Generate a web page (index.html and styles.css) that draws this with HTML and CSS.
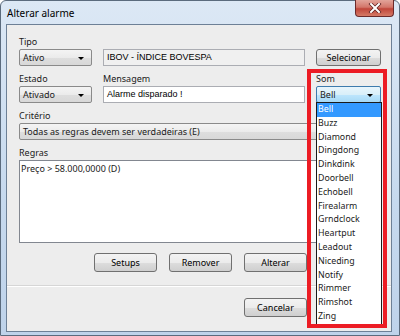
FILE: index.html
```html
<!DOCTYPE html>
<html lang="pt">
<head>
  <meta charset="UTF-8" />
  <title>Alterar alarme</title>
  <link rel="stylesheet" href="styles.css">
</head>
<body>

<div class="window">
  <!-- Barra de título -->
  <div class="titlebar">
    <span class="title">Alterar alarme</span>
    <div class="close">
      <svg width="14" height="10" viewBox="0 0 14 10">
        <path d="M3 1 L11 9 M11 1 L3 9" stroke="#5a1e1e" stroke-width="3.4" stroke-linecap="square"/>
        <path d="M3 1 L11 9 M11 1 L3 9" stroke="#ffffff" stroke-width="2" stroke-linecap="square"/>
      </svg>
    </div>
  </div>

  <div class="client">
    <div class="form">
      <div class="row">
        <div class="field col1">
          <span class="lbl">Tipo</span>
          <div class="combo">Ativo<span class="arrow"></span></div>
        </div>
        <div class="field col2">
          <span class="lbl"></span>
          <div class="textbox readonly">IBOV - ÍNDICE BOVESPA</div>
        </div>
        <div class="field col3">
          <span class="lbl"></span>
          <div class="btn">Selecionar</div>
        </div>
      </div>

      <div class="row">
        <div class="field col1">
          <span class="lbl">Estado</span>
          <div class="combo">Ativado<span class="arrow"></span></div>
        </div>
        <div class="field col2">
          <span class="lbl">Mensagem</span>
          <div class="textbox">Alarme disparado !</div>
        </div>
        <div class="field col3">
          <span class="lbl">Som</span>
          <div class="combo focus">Bell<span class="arrow"></span></div>
        </div>
      </div>

      <div class="field">
        <span class="lbl">Critério</span>
        <div class="combo">Todas as regras devem ser verdadeiras (E)<span class="arrow"></span></div>
      </div>

      <div class="field">
        <span class="lbl">Regras</span>
        <div class="listbox">Preço &gt; 58.000,0000 (D)</div>
      </div>

      <div class="buttons">
        <div class="btn">Setups</div>
        <div class="btn">Remover</div>
        <div class="btn">Alterar</div>
        <div class="btn ghost"></div>
      </div>
    </div>

    <div class="footer">
      <div class="btn">Cancelar</div>
      <div class="btn ghost"></div>
    </div>
  </div>

  <!-- Lista aberta do combo Som -->
  <div class="droplist">
    <div class="item selected">Bell</div>
    <div class="item">Buzz</div>
    <div class="item">Diamond</div>
    <div class="item">Dingdong</div>
    <div class="item">Dinkdink</div>
    <div class="item">Doorbell</div>
    <div class="item">Echobell</div>
    <div class="item">Firealarm</div>
    <div class="item">Grndclock</div>
    <div class="item">Heartput</div>
    <div class="item">Leadout</div>
    <div class="item">Niceding</div>
    <div class="item">Notify</div>
    <div class="item">Rimmer</div>
    <div class="item">Rimshot</div>
    <div class="item">Zing</div>
  </div>

  <div class="mark"></div>
</div>

</body>
</html>
```

FILE: styles.css
```css
html, body {
  margin: 0;
  padding: 0;
  background: #ffffff;
  font-family: 'Noto Sans', sans-serif;
  font-size: 9px;
  color: #1a1a1a;
}

.window {
  position: relative;
  box-sizing: border-box;
  width: 400px;
  height: 336px;
  border: 1px solid #5b6b7d;
  border-radius: 6px 6px 0 0;
  padding: 0 7px 3px 5px;
  background: linear-gradient(180deg, #dce8f5 0%, #c6d9ee 60%, #bfd3ea 100%);
  display: flex;
  flex-direction: column;
}

.titlebar {
  height: 23px;
  display: flex;
  align-items: center;
}

.title {
  padding-left: 1px;
  font-size: 10px;
  color: #000;
}

.close {
  position: absolute;
  top: -1px;
  right: 5px;
  width: 39px;
  height: 17px;
  box-sizing: border-box;
  border: 1px solid #6b2a2a;
  border-top: none;
  border-radius: 0 0 4px 4px;
  background: linear-gradient(180deg, #e2a49a 0%, #d3766a 45%, #c0463a 55%, #d57a66 100%);
  display: flex;
  align-items: center;
  justify-content: center;
}

.client {
  flex: 1;
  border: 1px solid #6d8096;
  background: #ededed;
  display: flex;
  flex-direction: column;
}

.form {
  padding: 11px 9px 0 12px;
  display: flex;
  flex-direction: column;
  gap: 7px;
}

.row {
  display: flex;
  gap: 11px;
}

.field {
  display: flex;
  flex-direction: column;
}

.col1 { width: 73px; }
.col2 { width: 202px; }
.col3 { width: 65px; }

.lbl {
  height: 13px;
  line-height: 12px;
  white-space: nowrap;
}

.combo {
  position: relative;
  box-sizing: border-box;
  height: 17px;
  line-height: 15px;
  padding-left: 3px;
  border: 1px solid #8a8a8a;
  border-radius: 2px;
  background: linear-gradient(180deg, #f4f4f4 0%, #ebebeb 50%, #dedede 51%, #d8d8d8 100%);
  white-space: nowrap;
}

.combo.focus {
  border-color: #3d7bad;
  background: linear-gradient(180deg, #e8f5fc 0%, #d9eff9 50%, #bee6fd 51%, #a7d9f5 100%);
}

.arrow {
  position: absolute;
  right: 7px;
  top: 7px;
  width: 0;
  height: 0;
  border-left: 3px solid transparent;
  border-right: 3px solid transparent;
  border-top: 3px solid #000;
}

.textbox {
  box-sizing: border-box;
  height: 17px;
  line-height: 15px;
  padding-left: 3px;
  border: 1px solid #abadb3;
  background: #ffffff;
  font-family: 'Liberation Sans', sans-serif;
  font-size: 9px;
  color: #000;
}

.textbox.readonly {
  background: #f0f0f0;
}

.listbox {
  box-sizing: border-box;
  height: 83px;
  padding: 2px 1px;
  border: 1px solid #828790;
  background: #ffffff;
  line-height: 12px;
}

.btn {
  box-sizing: border-box;
  width: 63px;
  height: 19px;
  line-height: 17px;
  text-align: center;
  border: 1px solid #707070;
  border-radius: 3px;
  background: linear-gradient(180deg, #f3f3f3 0%, #ebebeb 50%, #dddddd 51%, #cfcfcf 100%);
  color: #000;
}

.col3 .btn {
  width: 65px;
  height: 17px;
  line-height: 15px;
}

.btn.ghost {
  visibility: hidden;
}

.buttons {
  display: flex;
  justify-content: flex-end;
  gap: 12px;
  margin-top: 3px;
}

.footer {
  margin-top: 13px;
  border-top: 1px solid #d6d6d6;
  box-shadow: inset 0 1px 0 #ffffff;
  padding: 12px 9px 0 0;
  display: flex;
  justify-content: flex-end;
  gap: 12px;
}

.droplist {
  position: absolute;
  left: 315px;
  top: 101px;
  width: 66px;
  height: 223px;
  box-sizing: border-box;
  border: 1px solid #1a1a1a;
  background: #ffffff;
}

.item {
  height: 13.8px;
  line-height: 13.8px;
  padding-left: 1px;
  font-size: 8.8px;
  color: #1a1a1a;
}

.item.selected {
  background: #3399ff;
  color: #ffffff;
}

.mark {
  position: absolute;
  left: 306px;
  top: 68px;
  width: 80px;
  height: 259px;
  box-sizing: border-box;
  border: 4px solid #ec1c24;
  pointer-events: none;
}
```
